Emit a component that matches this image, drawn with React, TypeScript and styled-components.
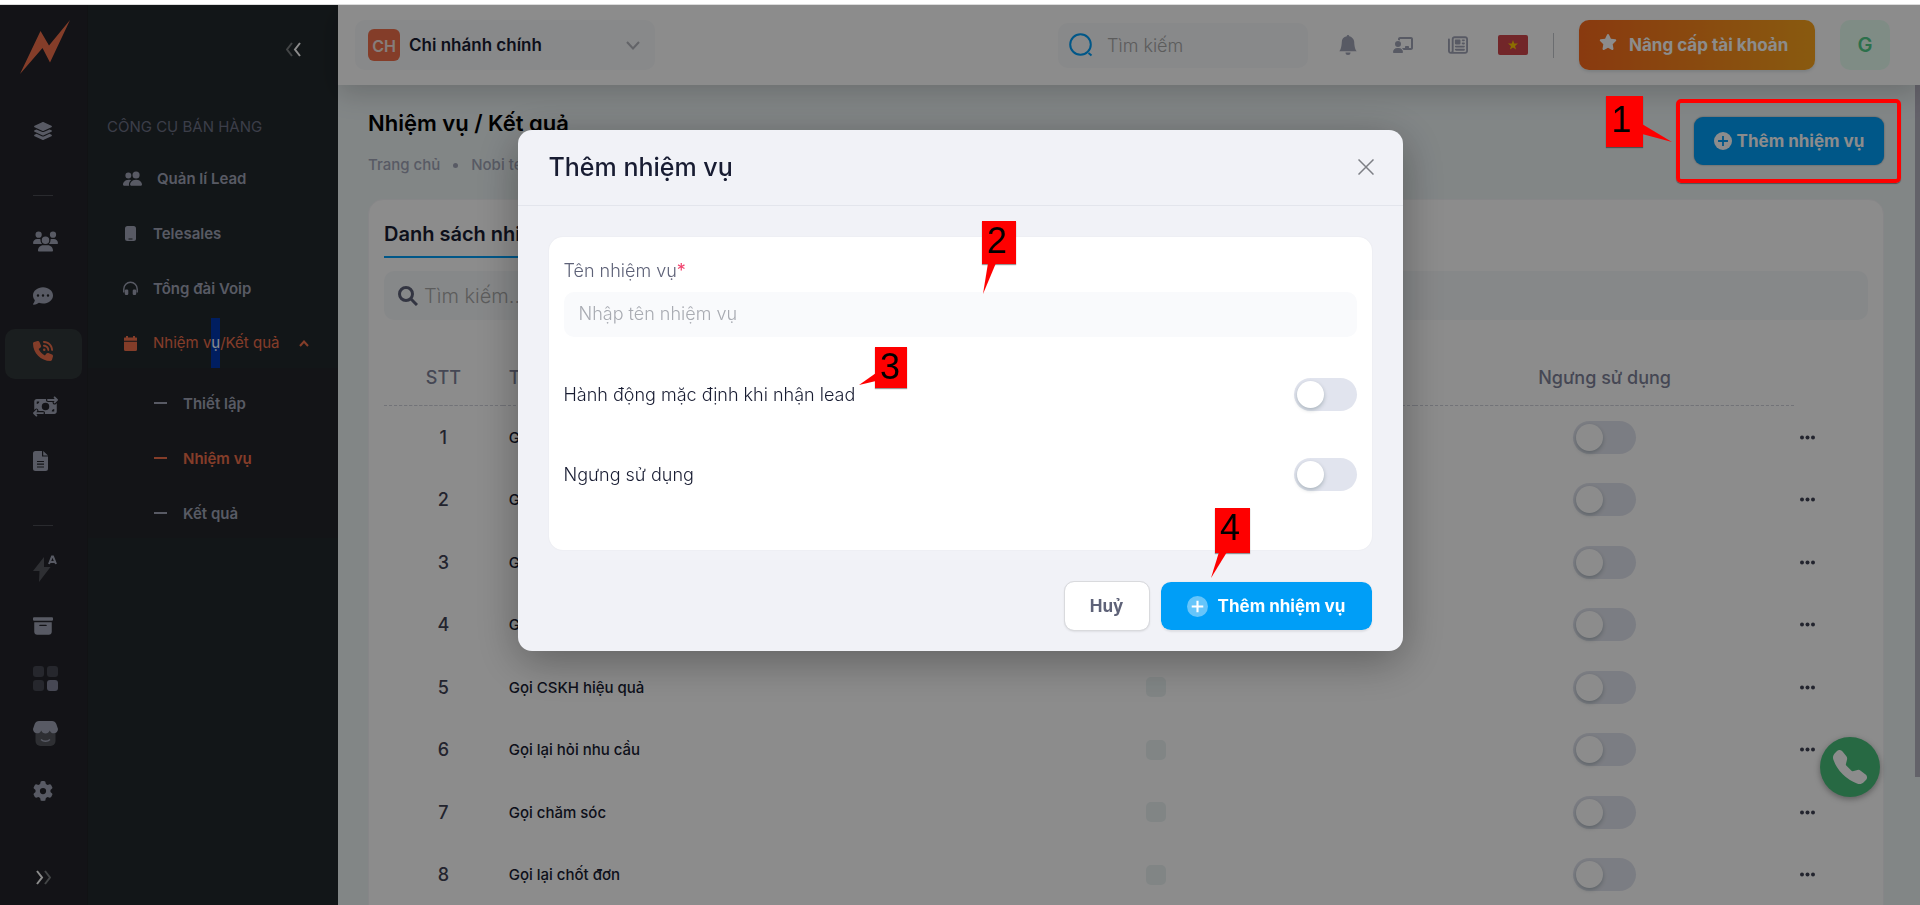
import React from 'react';
import styled, { createGlobalStyle, css } from 'styled-components';
import {
  FaLayerGroup, FaUsers, FaCommentDots, FaPhoneVolume, FaMoneyBillTransfer, FaGear,
  FaChalkboardUser, FaRegNewspaper, FaStar,
} from 'react-icons/fa6';
import { BsPeopleFill, BsArchiveFill, BsBellFill, BsTelephoneFill } from 'react-icons/bs';

const Global = createGlobalStyle`
  *, *::before, *::after { box-sizing: border-box; }
  html, body, #root { height: 100%; }
  body { margin: 0; background: #fff; font-family: Inter, "Noto Sans", sans-serif; font-size: 16px; color: #181c32; overflow: hidden; }
  button, input, select { font-family: inherit; }
  a { color: inherit; text-decoration: none; }
  h1, h2, p, ul { margin: 0; padding: 0; }
  ul { list-style: none; }
`;

const Screen = styled.div`
  height: 100vh;
  padding-top: 5px;
  position: relative;
  &::before { content: ''; position: absolute; top: 4px; left: 0; right: 0; height: 1px; background: #dcdcdc; }
`;

const Shell = styled.div`
  display: flex;
  height: 100%;
  overflow: hidden;
`;

/* Icon rail */

const Rail = styled.nav`
  flex: 0 0 88px;
  display: flex;
  flex-direction: column;
  background: #23242a;
  border-right: 1px solid #1f2126;
`;

const LogoLink = styled.a`
  height: 104px;
  padding: 14px 0 0 19px;
`;

const RailList = styled.ul`
  flex: 1;
  display: flex;
  flex-direction: column;
  gap: 5px;
  padding: 0 5px;
`;

const RailLink = styled.a<{ $active?: boolean; $tall?: boolean }>`
  display: flex;
  align-items: center;
  height: 50px;
  width: 77px;
  padding: 0 0 ${p => (p.$tall ? 12 : 6)}px 28px;
  border-radius: 10px;
  color: ${p => (p.$active ? '#f1704c' : '#a1a5b7')};
  background: ${p => (p.$active ? '#313739' : 'transparent')};
`;

const RailDivider = styled.li`
  height: 50px;
  padding: 31px 0 0 28px;
  &::before { content: ''; display: block; width: 20px; height: 1px; background: #4c4e55; }
`;

const IconButton = styled.button`
  display: flex;
  padding: 0;
  border: 0;
  background: none;
  color: inherit;
  cursor: pointer;
`;

const RailFoot = styled.div`
  padding: 0 0 20px 36px;
`;

/* Secondary menu */

const Side = styled.aside`
  flex: 0 0 250px;
  background: #22292d;
`;

const SideTop = styled.div`
  display: flex;
  justify-content: flex-end;
  padding: 37px 37px 0 0;
`;

const SideHeading = styled.h2`
  padding: 60px 0 0 19px;
  font-size: 15px;
  line-height: 20px;
  font-weight: 400;
  color: #6d7185;
`;

const SideList = styled.ul`
  display: flex;
  flex-direction: column;
  gap: 5px;
  padding-top: 16px;
`;

const SideLink = styled.a<{ $active?: boolean }>`
  display: flex;
  align-items: center;
  gap: 15px;
  height: 50px;
  padding: 0 29px 0 35px;
  font-size: 15px;
  font-weight: ${p => (p.$active ? 400 : 600)};
  color: ${p => (p.$active ? '#f1704c' : '#a1a5b7')};
  & > svg:last-child:not(:first-child) { margin-left: auto; }
`;

const Selected = styled.span`
  display: inline-block;
  line-height: 50px;
  background: #0038b0;
  color: #fff;
`;

const SubList = styled.ul`
  display: flex;
  flex-direction: column;
  gap: 5px;
  padding-top: 10px;
  background: #23252b;
`;

const SubLink = styled.a<{ $active?: boolean }>`
  display: flex;
  align-items: center;
  gap: 16px;
  height: 50px;
  padding: 0 0 0 66px;
  font-size: 15px;
  font-weight: 600;
  color: ${p => (p.$active ? '#f1704c' : '#a1a5b7')};
  &::before { content: ''; width: 13px; height: 2px; background: currentColor; }
`;

/* Main area */

const Main = styled.div`
  flex: 1;
  min-width: 0;
  display: flex;
  flex-direction: column;
  background: #edf4f5;
`;

const Header = styled.header`
  flex: 0 0 80px;
  display: flex;
  align-items: center;
  padding: 0 30px 0 17px;
  background: #fff;
  box-shadow: 0 8px 28px rgba(0, 0, 0, 0.18);
  position: relative;
  color: #a1a5b7;
`;

const Branch = styled.label`
  display: flex;
  align-items: center;
  width: 300px;
  height: 50px;
  padding: 0 15px 0 13px;
  gap: 9px;
  border-radius: 10px;
  background: #f7f9fb;
`;

const BranchBadge = styled.span`
  width: 32px;
  height: 32px;
  border-radius: 6px;
  background: #f1704c;
  color: #f4e4e0;
  font-size: 16px;
  font-weight: 600;
  line-height: 34px;
  text-align: center;
`;

const BranchSelect = styled.select`
  flex: 1;
  appearance: none;
  border: 0;
  padding: 0;
  background: none;
  font-size: 17px;
  font-weight: 600;
  color: #181c32;
`;

const HeaderSearch = styled.label`
  display: flex;
  align-items: center;
  gap: 14px;
  width: 250px;
  height: 45px;
  margin-left: auto;
  padding: 0 11px;
  border-radius: 10px;
  background: #f7f9fb;
`;

const fieldBase = css`
  flex: 1;
  min-width: 0;
  border: 0;
  outline: 0;
  padding: 0;
  background: none;
  color: #3f4254;
  font-weight: 300;
`;

const SearchInput = styled.input<{ $size: number }>`
  ${fieldBase}
  font-size: ${p => p.$size}px;
  &::placeholder { color: #a8a8a8; opacity: 1; }
`;

const HeaderIcons = styled.div`
  display: flex;
  align-items: center;
  gap: 35px;
  margin: 0 30px;
`;

const Rule = styled.span`
  width: 1px;
  height: 25px;
  margin: 0 25px;
  background: #c4c6cc;
`;

const Upgrade = styled.button`
  display: flex;
  align-items: center;
  gap: 12px;
  height: 50px;
  width: 236px;
  padding: 0 0 0 20px;
  border: 0;
  border-radius: 10px;
  background: linear-gradient(90deg, #f96a1c, #f9a41c);
  box-shadow: 0 2px 3px rgba(0, 60, 80, 0.12);
  color: #fff;
  font-size: 17px;
  font-weight: 700;
  white-space: nowrap;
  & svg { margin-bottom: 6px; }
`;

const Avatar = styled.button`
  width: 50px;
  height: 50px;
  margin-left: 25px;
  border: 0;
  border-radius: 10px;
  background: #e8fff3;
  color: #50cd89;
  font-size: 20px;
  font-weight: 600;
`;

const Content = styled.main`
  flex: 1;
  min-height: 0;
  overflow: hidden;
  display: flex;
  justify-content: space-between;
`;

const ScrollBar = styled.div`
  flex: 0 0 5px;
  height: 692px;
  background: #b5b2c0;
`;

const PageBody = styled.div`
  flex: 1;
  padding: 20px 31px 0 30px;
`;

const TitleBar = styled.div`
  display: flex;
  justify-content: space-between;
  align-items: flex-start;
  height: 94px;
`;

const PageTitle = styled.h1`
  padding-top: 4px;
  font-size: 22px;
  line-height: 28px;
  font-weight: 600;
  color: #000;
`;

const Crumbs = styled.nav`
  display: flex;
  align-items: center;
  gap: 13px;
  padding-top: 18px;
  font-size: 15px;
  line-height: 20px;
  font-weight: 500;
  color: #a1a5b7;
`;

const Dot = styled.span`
  width: 5px;
  height: 5px;
  border-radius: 50%;
  background: currentColor;
`;

const AddButton = styled.button`
  display: flex;
  align-items: center;
  justify-content: center;
  gap: 5px;
  height: 48px;
  width: 190px;
  margin-top: 12px;
  padding: 0;
  border: 0;
  border-radius: 9px;
  background: #009ef7;
  box-shadow: 0 0 2px rgba(0, 0, 0, 0.4);
  color: #fff;
  font-size: 17px;
  font-weight: 700;
`;

const Card = styled.section`
  padding: 20px 15px;
  border: 1px solid #f5f5f7;
  border-radius: 15px;
  background: #fff;
`;

const Tab = styled.button`
  display: block;
  height: 38px;
  padding: 0 0 8px;
  border: 0;
  border-bottom: 2px solid #009ef7;
  background: none;
  font-size: 20px;
  font-weight: 600;
  color: #181c32;
`;

const TableSearch = styled.label`
  display: flex;
  align-items: center;
  gap: 6px;
  height: 49px;
  margin-top: 13px;
  padding: 0 14px;
  border-radius: 10px;
  background: #f5f8fa;
  color: #5e6278;
`;

const Table = styled.table`
  width: 100%;
  margin-top: 34px;
  border-collapse: collapse;
  table-layout: fixed;
`;

const Th = styled.th<{ $align?: string }>`
  height: 51px;
  padding: 0 6px 3px;
  border-bottom: 1px dashed #cfd1da;
  text-align: ${p => p.$align || 'center'};
  font-size: 18px;
  font-weight: 500;
  color: #7e8299;
  &:last-child { border: 0; }
`;

const Row = styled.tr`
  height: 63px;
  &:nth-child(even) { height: 62px; }
`;

const Td = styled.td<{ $kind?: 'num' | 'name' | 'more' }>`
  padding: 1px 6px 0;
  text-align: ${p => (p.$kind === 'name' || p.$kind === 'more' ? 'left' : 'center')};
  vertical-align: middle;
  font-size: ${p => (p.$kind === 'num' ? 18 : 15)}px;
  font-weight: 500;
  color: ${p => (p.$kind === 'num' ? '#3f4254' : '#181c32')};
`;

const Tick = styled.input`
  appearance: none;
  display: block;
  width: 20px;
  height: 20px;
  margin: 0 auto;
  border-radius: 5px;
  background: #ebf3f3;
`;

const Switch = styled.input`
  appearance: none;
  display: inline-block;
  flex: none;
  vertical-align: middle;
  width: 63px;
  height: 33px;
  margin: 0;
  padding: 3px;
  border-radius: 17px;
  background: #e1e4ee;
  &::before {
    content: '';
    display: block;
    width: 27px;
    height: 27px;
    border-radius: 50%;
    background: #fff;
    box-shadow: 0 2px 4px rgba(0, 35, 40, 0.25);
  }
`;

const CallButton = styled.button`
  position: fixed;
  right: 40px;
  bottom: 108px;
  width: 60px;
  height: 60px;
  display: flex;
  align-items: center;
  justify-content: center;
  padding: 0;
  border: 0;
  border-radius: 50%;
  background: #48c07b;
  box-shadow: 0 2px 6px rgba(0, 0, 0, 0.35);
  color: #fff;
`;

/* Dialog */

const Overlay = styled.div`
  position: fixed;
  inset: 5px 0 0;
  display: flex;
  justify-content: center;
  align-items: flex-start;
  padding: 125px 20px 0;
  background: rgba(0, 0, 0, 0.45);
`;

const Modal = styled.form`
  position: relative;
  width: 100%;
  max-width: 885px;
  border-radius: 14px;
  background: #f1f2f7;
  box-shadow: 0 10px 44px rgba(0, 0, 0, 0.32);
`;

const ModalHead = styled.div`
  display: flex;
  align-items: center;
  justify-content: space-between;
  height: 76px;
  padding: 0 29px 2px 31px;
  border-bottom: 1px solid #e3e5ec;
`;

const ModalTitle = styled.h2`
  font-size: 25px;
  line-height: 32px;
  font-weight: 500;
  color: #181c32;
`;

const FormCard = styled.div`
  margin: 31px 31px 0;
  padding: 21px 15px 36px;
  border-radius: 14px;
  background: #fff;
  box-shadow: 0 0 2px rgba(0, 0, 0, 0.06);
`;

const FieldLabel = styled.label`
  display: block;
  margin-bottom: 8px;
  font-size: 18px;
  line-height: 26px;
  font-weight: 300;
  color: #5e6278;
  & span { color: #f1416c; font-weight: 400; }
`;

const NameInput = styled.input`
  display: block;
  width: 100%;
  height: 45px;
  margin-bottom: 17px;
  padding: 0 15px 2px;
  border: 0;
  border-radius: 10px;
  background: #f9fafc;
  font-size: 18px;
  font-weight: 300;
  &::placeholder { color: #a8abb2; opacity: 1; }
`;

const SwitchRow = styled.label`
  display: flex;
  align-items: center;
  justify-content: space-between;
  height: 80px;
  font-size: 18px;
  font-weight: 300;
  color: #181c32;
`;

const ModalFoot = styled.div`
  display: flex;
  justify-content: flex-end;
  gap: 11px;
  padding: 31px 31px 20px;
`;

const DialogButton = styled.button<{ $primary?: boolean }>`
  display: flex;
  align-items: center;
  justify-content: center;
  gap: 10px;
  width: ${p => (p.$primary ? 211 : 86)}px;
  height: 50px;
  padding: 0;
  border: solid ${p => (p.$primary ? 'transparent' : '#d9dadd')};
  border-width: ${p => (p.$primary ? '1px 0' : '1px')};
  border-radius: 10px;
  background: ${p => (p.$primary ? '#009ef7' : '#fff')};
  background-clip: padding-box;
  box-shadow: 0 1px 2px rgba(0, 0, 0, 0.08);
  color: ${p => (p.$primary ? '#fff' : '#5e6278')};
  font-size: 17px;
  font-weight: 700;
`;

/* Numbered pointers */

const Pointer = styled.div<{ $w: number; $h: number }>`
  position: absolute;
  width: ${p => p.$w}px;
  height: ${p => p.$h}px;
  background: #fe0000;
  box-shadow: 0 1px 1px rgba(0, 0, 0, 0.4);
  font-family: "Liberation Sans", Arial, sans-serif;
  font-size: 36px;
  line-height: 40px;
  color: #000;
  text-align: center;
  & svg { position: absolute; left: 0; top: 0; overflow: visible; }
`;

const PointerOne = styled(Pointer)`position: fixed; right: 277px; top: 96px; line-height: 48px; padding-right: 6px;`;
const PointerTwo = styled(Pointer)`left: 464px; top: 91px; padding-right: 3px;`;
const PointerThree = styled(Pointer)`left: 357px; top: 217px; padding-right: 1px;`;
const PointerFour = styled(Pointer)`left: 697px; top: 378px; padding-right: 4px;`;

const Highlight = styled.div`
  position: fixed;
  right: 19px;
  top: 99px;
  width: 225px;
  height: 84px;
  border: 4px solid #fe0000;
  border-radius: 5px;
  box-shadow: 0 1px 1px rgba(0, 0, 0, 0.4);
`;

const Tail = ({ points }: { points: string }) => (
  <svg width="1" height="1" aria-hidden="true"><polygon points={points} fill="#fe0000" /></svg>
);

const Logo = () => (
  <svg width="52" height="56" viewBox="0 0 52 56" aria-hidden="true">
    <path d="M51 1 31 43.500 23.500 29 1 55 21.500 12 30 26.500Z" fill="#f1704c" />
  </svg>
);

const Chevrons = ({ flip }: { flip?: boolean }) => (
  <svg width="15" height="15" viewBox="0 0 15 15" fill="none" strokeWidth="2" aria-hidden="true">
    <path d={flip ? 'M1 1l5 6.500-5 6.500' : 'M14 1 9 7.500l5 6.500'} stroke="#fff" />
    <path d={flip ? 'M9 1l5 6.500-5 6.500' : 'M6 1 1 7.500 6 14'} stroke="#7a7e80" />
  </svg>
);

const FileLines = () => (
  <svg width="15" height="20" viewBox="0 0 15 20" aria-hidden="true">
    <path d="M2.500 0H9v5.500h6v12a2.500 2.500 0 0 1-2.500 2.500h-10A2.500 2.500 0 0 1 0 17.500v-15A2.500 2.500 0 0 1 2.500 0zM10.200 0 15 4.500h-4.800z" fill="currentColor" />
    <path d="M4 10.500h7M4 13.200h7M4 16h7" stroke="#23242a" strokeWidth="1.200" />
  </svg>
);

const BoltAuto = () => (
  <svg width="25" height="28" viewBox="0 0 25 28" aria-hidden="true">
    <path d="M11 3 0 17h6.500L6 28 17.500 13H11z" fill="#54565e" />
    <path d="M16 10 19 2.500h1L23 10M17 8h5" fill="none" stroke="#a1a5b7" strokeWidth="2" />
  </svg>
);

const Tiles = () => (
  <svg width="25" height="25" viewBox="0 0 25 25" fill="#464852" aria-hidden="true">
    <rect width="11" height="11" rx="3" />
    <rect x="14" width="11" height="11" rx="3" />
    <rect y="14" width="11" height="11" rx="3" />
    <rect x="14" y="14" width="11" height="11" rx="3" fill="#81849a" />
  </svg>
);

const Shop = () => (
  <svg width="25" height="25" viewBox="0 0 25 25" aria-hidden="true">
    <path d="M2.500 9h20v11a5 5 0 0 1-5 5h-10a5 5 0 0 1-5-5z" fill="#54565e" />
    <path d="M6 0h13c2 0 3.500 1 4.300 3L25 8c0 5-6.500 6-8.300 1.500-1.200 4-7.200 4-8.400 0C6.500 14 0 13 0 8l1.700-5C2.500 1 4 0 6 0z" fill="#a1a5b7" />
    <path d="M8 18.500c2.500 2.300 6.500 2.300 9 0" fill="none" stroke="#a1a5b7" strokeWidth="1.500" />
  </svg>
);

const Handset = () => (
  <svg width="15" height="15" viewBox="0 0 15 15" aria-hidden="true">
    <rect x="2" width="11" height="15" rx="2.500" fill="currentColor" />
    <path d="M5.500 13h4" stroke="#22292d" strokeWidth="1" />
  </svg>
);

const Headset = () => (
  <svg width="15" height="15" viewBox="0 0 15 15" aria-hidden="true">
    <path d="M.8 11.500V8a6.700 6.700 0 0 1 13.400 0v3.500" fill="none" stroke="currentColor" strokeWidth="1.400" />
    <rect x="1.800" y="8.500" width="3.500" height="5.500" rx="1.300" fill="currentColor" />
    <rect x="9.700" y="8.500" width="3.500" height="5.500" rx="1.300" fill="currentColor" />
  </svg>
);

const CalendarGlyph = () => (
  <svg width="15" height="15" viewBox="0 0 15 15" fill="currentColor" aria-hidden="true">
    <path d="M3 0h2v1.500h5V0h2v1.500h1.500q.5 0 .5.700V4.800H1V2.200q0-.7.500-.7H3zM1 5.800h13V13.500a1.500 1.500 0 0 1-1.500 1.500h-10A1.500 1.500 0 0 1 1 13.500z" />
  </svg>
);

const ThinSearch = () => (
  <svg width="24" height="24" viewBox="0 0 24 24" fill="none" stroke="#009ef7" strokeWidth="2" aria-hidden="true">
    <circle cx="11.500" cy="11.500" r="10.300" />
    <path d="m19.500 20 3 2.500" />
  </svg>
);

const BoldSearch = () => (
  <svg width="20" height="20" viewBox="0 0 20 20" fill="none" stroke="currentColor" strokeWidth="3" aria-hidden="true">
    <circle cx="8" cy="8" r="6.500" />
    <path d="m12.500 12.500 6.500 6.500" />
  </svg>
);

const Down = () => (
  <svg width="14" height="9" viewBox="0 0 14 9" fill="none" stroke="#b4b6bd" strokeWidth="2" aria-hidden="true"><path d="m1 1 6 6.500L13 1" /></svg>
);

const Up = () => (
  <svg width="10" height="7" viewBox="0 0 10 7" fill="none" stroke="#f1704c" strokeWidth="2" aria-hidden="true"><path d="m1 6 4-4.500L9 6" /></svg>
);

const Flag = () => (
  <svg width="30" height="20" viewBox="0 0 30 20" aria-hidden="true">
    <rect width="30" height="20" rx="2" fill="#cf454b" />
    <path d="m15 5 1.200 3.600H20l-3 2.300 1.100 3.700L15 12.400l-3.100 2.200 1.100-3.700-3-2.300h3.800z" fill="#ffc800" />
  </svg>
);

const CirclePlus = ({ size, disc, plus }: { size: number; disc: string; plus: string }) => (
  <svg width={size} height={size} viewBox="0 0 20 20" aria-hidden="true">
    <circle cx="10" cy="10" r="10" fill={disc} />
    <path d="M10 4.500v11M4.500 10h11" stroke={plus} strokeWidth="2" />
  </svg>
);

const More = () => (
  <svg width="15" height="5" viewBox="0 0 15 5" fill="#3f4254" aria-hidden="true">
    <circle cx="2" cy="2.500" r="2" /><circle cx="7.500" cy="2.500" r="2" /><circle cx="13" cy="2.500" r="2" />
  </svg>
);

const Close = () => (
  <svg width="16" height="16" viewBox="0 0 16 16" stroke="#7d7f85" strokeWidth="1.500" aria-hidden="true"><path d="m.5.500 15 15m0-15-15 15" /></svg>
);

const tasks = [
  'Gọi lần 1', 'Gọi lần 2', 'Gọi lần 3', 'Gọi lại sau',
  'Gọi CSKH hiệu quả', 'Gọi lại hỏi nhu cầu', 'Gọi chăm sóc', 'Gọi lại chốt đơn',
];

const railItems: { label: string; icon?: React.ReactNode; active?: boolean; tall?: boolean }[] = [
  { label: 'Tổng quan', icon: <FaLayerGroup size={20} /> },
  { label: '' },
  { label: 'Khách hàng', icon: <FaUsers size={25} /> },
  { label: 'Tin nhắn', icon: <FaCommentDots size={20} /> },
  { label: 'Telesales', icon: <FaPhoneVolume size={20} />, active: true },
  { label: 'Thu chi', icon: <FaMoneyBillTransfer size={25} /> },
  { label: 'Báo cáo', icon: <FileLines /> },
  { label: '' },
  { label: 'Tự động', icon: <BoltAuto />, tall: true },
  { label: 'Kho', icon: <BsArchiveFill size={20} /> },
  { label: 'Ứng dụng', icon: <Tiles />, tall: true },
  { label: 'Cửa hàng', icon: <Shop />, tall: true },
  { label: 'Cài đặt', icon: <FaGear size={20} /> },
];

export default function App() {
  return (
    <>
      <Global />
      <Screen>
        <Shell>
          <Rail>
            <LogoLink href="#" aria-label="Nobi"><Logo /></LogoLink>
            <RailList>
              {railItems.map((it, i) => it.icon
                ? <li key={i}><RailLink href="#" $active={it.active} $tall={it.tall} aria-label={it.label}>{it.icon}</RailLink></li>
                : <RailDivider key={i} />)}
            </RailList>
            <RailFoot><IconButton aria-label="Mở rộng"><Chevrons flip /></IconButton></RailFoot>
          </Rail>
          <Side>
            <SideTop><IconButton aria-label="Thu gọn"><Chevrons /></IconButton></SideTop>
            <SideHeading>CÔNG CỤ BÁN HÀNG</SideHeading>
            <SideList>
              <li><SideLink href="#"><BsPeopleFill size={19} />Quản lí Lead</SideLink></li>
              <li><SideLink href="#"><Handset />Telesales</SideLink></li>
              <li><SideLink href="#"><Headset />Tổng đài Voip</SideLink></li>
              <li>
                <SideLink href="#" $active>
                  <CalendarGlyph />
                  <span>Nhiệm v<Selected>ụ</Selected>/Kết quả</span>
                  <Up />
                </SideLink>
                <SubList>
                  <li><SubLink href="#">Thiết lập</SubLink></li>
                  <li><SubLink href="#" $active>Nhiệm vụ</SubLink></li>
                  <li><SubLink href="#">Kết quả</SubLink></li>
                </SubList>
              </li>
            </SideList>
          </Side>
          <Main>
            <Header>
              <Branch>
                <BranchBadge>CH</BranchBadge>
                <BranchSelect aria-label="Chi nhánh"><option>Chi nhánh chính</option></BranchSelect>
                <Down />
              </Branch>
              <HeaderSearch>
                <ThinSearch />
                <SearchInput $size={18} placeholder="Tìm kiếm" aria-label="Tìm kiếm" />
              </HeaderSearch>
              <HeaderIcons>
                <IconButton aria-label="Thông báo"><BsBellFill size={20} /></IconButton>
                <IconButton aria-label="Hướng dẫn"><FaChalkboardUser size={20} /></IconButton>
                <IconButton aria-label="Tin tức"><FaRegNewspaper size={20} /></IconButton>
              </HeaderIcons>
              <IconButton aria-label="Tiếng Việt"><Flag /></IconButton>
              <Rule />
              <Upgrade><FaStar size={18} />Nâng cấp tài khoản</Upgrade>
              <Avatar aria-label="Tài khoản">G</Avatar>
            </Header>
            <Content>
              <PageBody>
                <TitleBar>
                  <div>
                    <PageTitle>Nhiệm vụ / Kết quả</PageTitle>
                    <Crumbs><a href="#">Trang chủ</a><Dot /><a href="#">Nobi telesales</a></Crumbs>
                  </div>
                  <AddButton><CirclePlus size={18} disc="#fff" plus="#009ef7" />Thêm nhiệm vụ</AddButton>
                </TitleBar>
                <Card>
                  <Tab>Danh sách nhiệm vụ</Tab>
                  <TableSearch>
                    <BoldSearch />
                    <SearchInput $size={20} placeholder="Tìm kiếm..." aria-label="Tìm kiếm nhiệm vụ" />
                  </TableSearch>
                  <Table>
                    <colgroup>
                      <col width="8%" /><col width="26.5%" /><col width="35%" /><col width="25.5%" /><col width="5%" />
                    </colgroup>
                    <thead>
                      <tr><Th>STT</Th><Th $align="left">Tên nhiệm vụ</Th><Th>Mặc định</Th><Th>Ngưng sử dụng</Th><Th /></tr>
                    </thead>
                    <tbody>
                      {tasks.map((t, i) => (
                        <Row key={t}>
                          <Td $kind="num">{i + 1}</Td>
                          <Td $kind="name">{t}</Td>
                          <Td><Tick type="checkbox" aria-label={`Mặc định ${t}`} /></Td>
                          <Td><Switch type="checkbox" aria-label={`Ngưng ${t}`} /></Td>
                          <Td $kind="more"><IconButton aria-label="Thao tác"><More /></IconButton></Td>
                        </Row>
                      ))}
                    </tbody>
                  </Table>
                </Card>
              </PageBody>
              <ScrollBar />
            </Content>
          </Main>
        </Shell>
        <CallButton aria-label="Gọi"><BsTelephoneFill size={34} /></CallButton>
      </Screen>
      <Overlay>
        <Modal>
          <ModalHead>
            <ModalTitle>Thêm nhiệm vụ</ModalTitle>
            <IconButton type="button" aria-label="Đóng"><Close /></IconButton>
          </ModalHead>
          <FormCard>
            <FieldLabel htmlFor="task-name">Tên nhiệm vụ<span>*</span></FieldLabel>
            <NameInput id="task-name" placeholder="Nhập tên nhiệm vụ" />
            <SwitchRow>Hành động mặc định khi nhận lead<Switch type="checkbox" /></SwitchRow>
            <SwitchRow>Ngưng sử dụng<Switch type="checkbox" /></SwitchRow>
          </FormCard>
          <ModalFoot>
            <DialogButton type="button">Huỷ</DialogButton>
            <DialogButton type="button" $primary>
              <CirclePlus size={21} disc="#66c5fa" plus="#fff" />Thêm nhiệm vụ
            </DialogButton>
          </ModalFoot>
          <PointerTwo $w={34} $h={43}><Tail points="6,42 14,42 1,73" />2</PointerTwo>
          <PointerThree $w={32} $h={41}><Tail points="1,26 1,34 -16,38" />3</PointerThree>
          <PointerFour $w={35} $h={45}><Tail points="4,44 12,44 -4,70" />4</PointerFour>
        </Modal>
      </Overlay>
      <PointerOne $w={37} $h={51}><Tail points="36,28 36,38 66,46" />1</PointerOne>
      <Highlight />
    </>
  );
}
